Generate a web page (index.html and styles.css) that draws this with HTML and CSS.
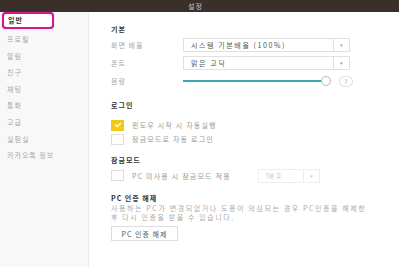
FILE: index.html
```html
<html>
<head>
  <meta charset="UTF-8">
  <title>설정</title>
  <link rel="stylesheet" href="styles.css">
</head>
<body>
<div class="app">
  <div class="titlebar"><p>설정</p></div>
  <div class="body">
    <div class="sidebar">
      <div class="menu-item active">일반</div>
      <div class="menu-item">프로필</div>
      <div class="menu-item">알림</div>
      <div class="menu-item">친구</div>
      <div class="menu-item">채팅</div>
      <div class="menu-item">통화</div>
      <div class="menu-item">고급</div>
      <div class="menu-item">실험실</div>
      <div class="menu-item">카카오톡 정보</div>
    </div>
    <div class="content">
      <div class="section-title">기본</div>
      <div class="row">
        <span class="label">화면 배율</span>
        <div class="select">
          <span class="select-text">시스템 기본배율 (100%)</span>
          <span class="select-arrow">&#9662;</span>
        </div>
      </div>
      <div class="row">
        <span class="label">폰트</span>
        <div class="select">
          <span class="select-text">맑은 고딕</span>
          <span class="select-arrow">&#9662;</span>
        </div>
      </div>
      <div class="row">
        <span class="label">음량</span>
        <div class="slider">
          <div class="track"></div>
          <div class="knob"></div>
        </div>
        <span class="help">?</span>
      </div>

      <div class="section-title login">로그인</div>
      <div class="check-row check-first">
        <span class="checkbox checked">
          <svg width="8" height="6" viewBox="0 0 8 6"><path d="M1 2.5 L3.3 4.5 L7 1" fill="none" stroke="#fff" stroke-width="1.3"/></svg>
        </span>
        <span class="check-text">윈도우 시작 시 자동실행</span>
      </div>
      <div class="check-row">
        <span class="checkbox"></span>
        <span class="check-text">잠금모드로 자동 로그인</span>
      </div>

      <div class="section-title lock">잠금모드</div>
      <div class="check-row lock-row">
        <span class="checkbox"></span>
        <span class="check-text">PC 미사용 시 잠금모드 적용</span>
        <div class="mini-select">
          <span class="mini-text">5분 후</span>
          <span class="mini-arrow">&#9662;</span>
        </div>
      </div>

      <div class="section-title auth">PC 인증 해제</div>
      <p class="desc">사용하는 PC가 변경되었거나 도용이 의심되는 경우 PC인증을 해제한<br>후 다시 인증을 받을 수 있습니다.</p>
      <button class="btn">PC 인증 해제</button>
    </div>
  </div>
</div>
</body>
</html>
```
FILE: styles.css
```css
body {
  margin: 0;
  background: #ffffff;
  font-family: "Noto Sans CJK KR", "Noto Sans", sans-serif;
}

.app {
  width: 399px;
  height: 267px;
  background: #ffffff;
}

.titlebar {
  height: 12px;
  background: #3b2f29;
  text-align: center;
}

.titlebar p {
  margin: 0;
  padding-right: 8px;
  font-size: 7px;
  line-height: 12px;
  color: #c9c3bf;
  letter-spacing: 1px;
}

.body {
  display: flex;
  height: 255px;
}

.sidebar {
  width: 88px;
  background: #f8f8f8;
  border-right: 1px solid #ececec;
}

.menu-item {
  height: 16.6px;
  line-height: 16.6px;
  padding-left: 7px;
  font-size: 7px;
  color: #a8a8a8;
  letter-spacing: 1px;
}

.menu-item.active {
  width: 44px;
  height: 13px;
  line-height: 13px;
  margin: 0 0 2px 2px;
  padding-left: 4px;
  color: #333333;
  font-weight: bold;
  background: #ffffff;
  border: 2px solid #d6168b;
  border-radius: 4px;
  box-shadow: 0 0 1px #e05aa8;
}

.content {
  flex: 1;
  padding: 12px 0 0 22px;
}

.section-title {
  height: 10px;
  line-height: 10px;
  font-size: 7px;
  font-weight: bold;
  color: #333333;
  letter-spacing: 1px;
}

.row {
  display: flex;
  align-items: center;
  height: 14px;
  margin-top: 4px;
}

.label {
  width: 72px;
  font-size: 7px;
  color: #a8a8a8;
  letter-spacing: 1px;
}

.select {
  display: flex;
  width: 165px;
  height: 12px;
  border: 1px solid #e0e0e0;
  background: #ffffff;
}

.select-text {
  flex: 1;
  padding-left: 7px;
  font-size: 7px;
  line-height: 12px;
  color: #555555;
  letter-spacing: 1.6px;
}

.select-arrow {
  width: 15px;
  border-left: 1px solid #e0e0e0;
  text-align: center;
  font-size: 5px;
  line-height: 12px;
  color: #999999;
}

.slider {
  position: relative;
  width: 148px;
  height: 14px;
}

.track {
  position: absolute;
  left: 0;
  top: 6px;
  width: 140px;
  height: 2px;
  background: #3ea7ab;
}

.knob {
  position: absolute;
  left: 138px;
  top: 2px;
  width: 8px;
  height: 8px;
  border: 1px solid #b8b8b8;
  border-radius: 50%;
  background: #ffffff;
}

.help {
  width: 12px;
  height: 9px;
  margin-left: 8px;
  border: 1px solid #dddddd;
  border-radius: 6px;
  font-size: 6px;
  line-height: 9px;
  text-align: center;
  color: #999999;
}

.login {
  margin-top: 12px;
}

.check-row {
  display: flex;
  align-items: center;
  height: 12px;
  margin-top: 2px;
}

.check-first {
  margin-top: 9px;
}

.checkbox {
  display: flex;
  align-items: center;
  justify-content: center;
  width: 11px;
  height: 9px;
  border: 1px solid #dedede;
  background: #ffffff;
}

.checkbox.checked {
  background: #f3c916;
  border-color: #f3c916;
}

.check-text {
  margin-left: 8px;
  font-size: 7px;
  color: #999999;
  letter-spacing: 1.2px;
}

.lock {
  margin-top: 10px;
}

.lock-row {
  height: 13px;
  margin-top: 4px;
}

.mini-select {
  display: flex;
  width: 60px;
  height: 12px;
  margin-left: 27px;
  border: 1px solid #eeeeee;
}

.mini-text {
  flex: 1;
  padding-left: 7px;
  font-size: 6px;
  line-height: 12px;
  color: #cccccc;
}

.mini-arrow {
  width: 15px;
  border-left: 1px solid #eeeeee;
  text-align: center;
  font-size: 5px;
  line-height: 12px;
  color: #cccccc;
}

.auth {
  margin-top: 11px;
}

.desc {
  margin: 1px 0 0 0;
  font-size: 7px;
  line-height: 8.5px;
  color: #aaaaaa;
  letter-spacing: 1.6px;
  white-space: nowrap;
}

.btn {
  display: block;
  margin-top: 5px;
  width: 67px;
  height: 15px;
  padding: 0;
  border: 1px solid #dddddd;
  background: #ffffff;
  font-family: "Noto Sans CJK KR", "Noto Sans", sans-serif;
  font-size: 7px;
  color: #555555;
  letter-spacing: 1px;
}
```
